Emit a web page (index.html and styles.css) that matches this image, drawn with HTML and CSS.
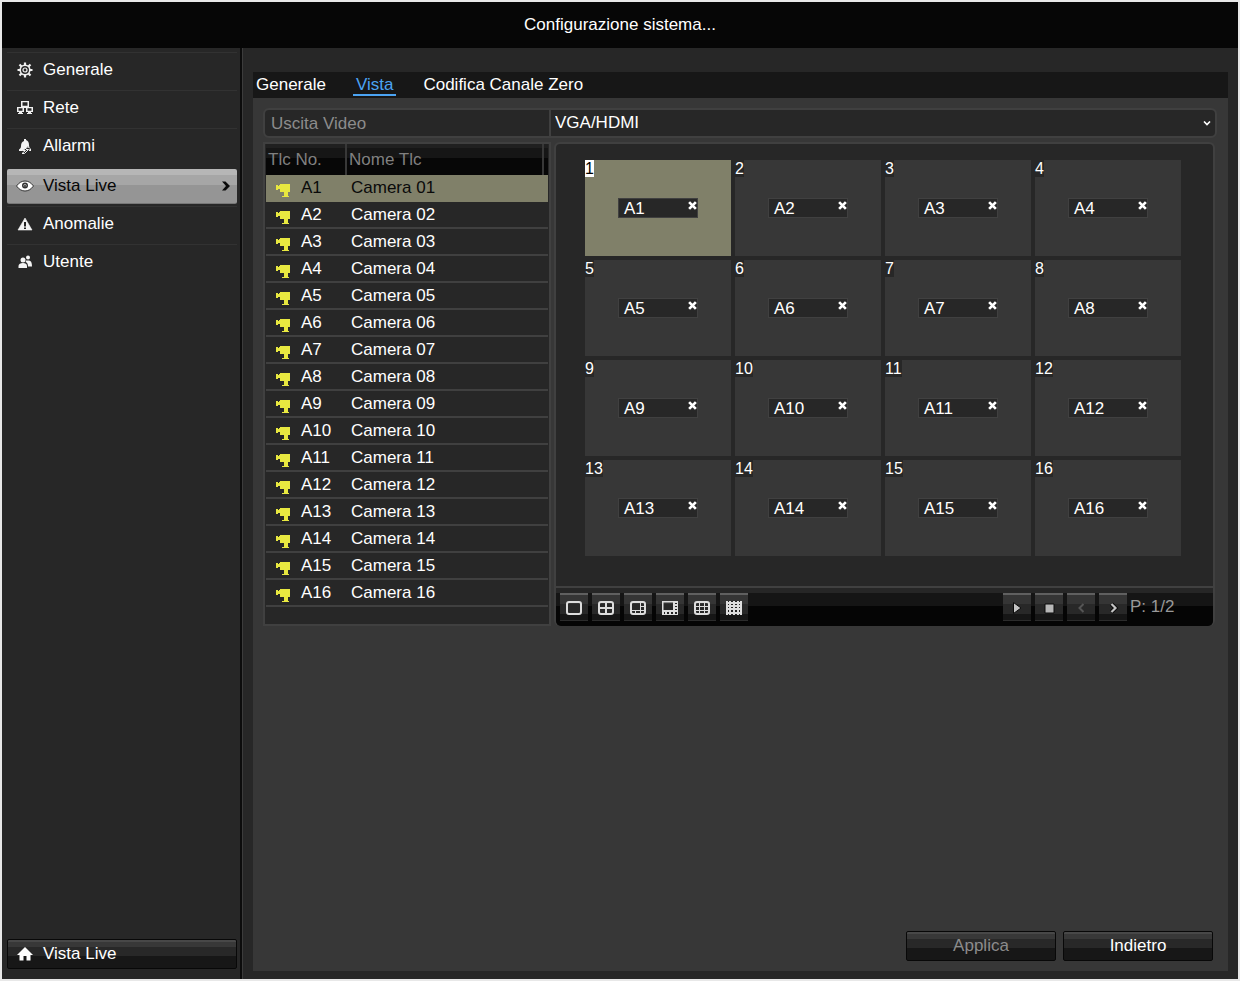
FILE: index.html
```html
<!DOCTYPE html>
<html lang="it">
<head>
<meta charset="utf-8">
<meta name="viewport" content="width=device-width, initial-scale=1">
<title>Configurazione sistema</title>
<link rel="stylesheet" href="styles.css">
</head>
<body>
<svg class="sprite" aria-hidden="true">
  <symbol id="cam" viewBox="0 0 14 13"><path d="M0 1h2v1h1V1h1V0h10v8h-2v4h1v1H6v-1h2V8H4V5H2v1H0z" fill="#e8e840"/></symbol>
  <symbol id="close" viewBox="0 0 8 8"><path d="M1 1l6 6M7 1L1 7" stroke="#fff" stroke-width="2.4"/></symbol>
</svg>
<div class="app">
  <header class="titlebar"><h1>Configurazione sistema...</h1></header>
  <div class="body">
    <aside class="sidebar">
      <nav class="menu" aria-label="Impostazioni">
        <a class="item" href="#generale"><svg class="icon" viewBox="0 0 16 16"><g fill="none" stroke="#f0f0f0"><circle cx="8" cy="8" r="4.800" stroke-width="1.600"/><circle cx="8" cy="8" r="2" stroke-width="1.200"/><path d="M8 .5v3M8 12.500v3M.5 8h3M12.500 8h3M2.500 2.500l2 2M11.500 11.500l2 2M2.500 13.500l2-2M11.500 4.500l2-2" stroke-width="2.200"/></g></svg>Generale</a>
        <a class="item" href="#rete"><svg class="icon" viewBox="0 0 16 16"><path d="M4 1h8v6h4v5h-2v1h1v1h-5v-1h1v-1H9V8H7v4H5v1h1v1H1v-1h1v-1H0V7h4zM5.500 2.300v3.400h5V2.300zM1.500 8.300v2.400h4V8.300zM10.500 8.300v2.400h4V8.300z" fill="#f0f0f0" fill-rule="evenodd"/></svg>Rete</a>
        <a class="item" href="#allarmi"><svg class="icon" viewBox="0 0 16 16"><path d="M7 1h2v1c2 .6 3 2.500 3 5 0 2 .7 3 2 4v2h-2l1-3.500-3 .5 1.500-2L5 13H2v-1.500c1.500-1 2-2 2-3.500 0-2.500 1-4.400 3-5z" fill="#f4f4f4"/><path d="M10 9.500L5.500 12.500h3L5 15.500h2.500l4-4H9" fill="none" stroke="#f4f4f4"/></svg>Allarmi</a>
        <a class="item active" href="#vista" aria-current="page"><svg class="icon eye" viewBox="0 0 18 12"><path d="M.5 6C3 2.500 6 1 9 1s6 1.500 8.500 5C15 9.500 12 11 9 11S3 9.500.5 6z" fill="#fff" stroke="#333"/><circle cx="9" cy="5.500" r="3" fill="#333"/><circle cx="9" cy="5.500" r="1.600" fill="#bbb"/><circle cx="9" cy="6" r="1" fill="#333"/></svg>Vista Live<svg class="chev" viewBox="0 0 8 10"><path d="M0 .5h3.500L8 5 3.500 9.500H0L4 5z" fill="#0a0a0a"/></svg></a>
        <a class="item" href="#anomalie"><svg class="icon" viewBox="0 0 16 16"><path d="M8 2l7 12H1z" fill="#f4f4f4" stroke="#f4f4f4" stroke-width=".6"/><path d="M7 6h2v4.500H7zM7 11.500h2V13H7z" fill="#222"/></svg>Anomalie</a>
        <a class="item" href="#utente"><svg class="icon" viewBox="0 0 16 16"><g fill="#f4f4f4"><circle cx="6" cy="6" r="2.500"/><path d="M1.500 14v-2c0-2 2-3 4.500-3s4 1 4 3v2z"/><circle cx="11" cy="3.500" r="2"/><path d="M9 6.500h3c2 0 3 2 3 6h-4C11 10 10.500 9 8.700 8z"/></g></svg>Utente</a>
      </nav>
      <button class="btn home" type="button"><svg class="icon" viewBox="0 0 16 16"><path d="M8 1l8 8h-2.500v5.500h-4V10h-3v4.500h-4V9H0z" fill="#fff"/></svg>Vista Live</button>
    </aside>
    <main class="main">
      <section class="panel">
        <nav class="tabs" aria-label="Schede">
          <a href="#tab-generale">Generale</a><a class="current" href="#tab-vista" aria-current="page">Vista</a><a href="#tab-zero">Codifica Canale Zero</a>
        </nav>
        <div class="field">
          <label for="output">Uscita Video</label>
          <div class="pick">
            <select id="output"><option>VGA/HDMI</option></select>
            <svg class="caret" viewBox="0 0 8 5"><path d="M1 .5l3 3 3-3" fill="none" stroke="#fff" stroke-width="1.600"/></svg>
          </div>
        </div>
        <div class="work">
          <div class="list">
            <table>
              <colgroup><col class="c-no"><col><col class="c-end"></colgroup>
              <thead><tr><th scope="col">Tlc No.</th><th scope="col">Nome Tlc</th><td></td></tr></thead>
              <tbody id="cameras"></tbody>
            </table>
          </div>
          <div class="view">
            <div class="grid" id="grid"></div>
            <div class="toolbar">
              <div class="tools">
                <button class="tool" type="button" aria-label="1 riquadro"><svg viewBox="0 0 16 14"><rect class="ln" x="1" y="1" width="14" height="12" rx="2"/></svg></button>
                <button class="tool" type="button" aria-label="4 riquadri"><svg viewBox="0 0 16 14"><rect class="ln" x="1" y="1" width="14" height="12" rx="2"/><path class="ln" d="M8 1v12M1 7h14"/></svg></button>
                <button class="tool" type="button" aria-label="6 riquadri"><svg viewBox="0 0 16 14"><rect class="ln" x="1" y="1" width="14" height="12" rx="2"/><path class="thin" d="M10.500 1v12M1 9.500h14M5.500 9.500V13M10.500 5.500H15"/></svg></button>
                <button class="tool" type="button" aria-label="8 riquadri"><svg viewBox="0 0 16 14"><path d="M0 0h16v14H0zM1.500 1.500v7.500H11V1.500z" fill="#ddd" fill-rule="evenodd"/><path d="M13 2h2v1h-2zM13 5h2v1h-2zM13 8h2v1h-2zM2 11h1v2H2zM5 11h2v2H5zM9 11h2v2H9zM13 11h2v2h-2z" fill="#222"/></svg></button>
                <button class="tool" type="button" aria-label="9 riquadri"><svg viewBox="0 0 16 14"><rect class="ln" x="1" y="1" width="14" height="12" rx="2"/><path class="thin" d="M5.500 1v12M10.500 1v12M1 5.500h14M1 9.500h14"/></svg></button>
                <button class="tool" type="button" aria-label="16 riquadri"><svg viewBox="0 0 16 14"><path d="M0 0h16v14H0z" fill="#ddd"/><path d="M2 0h1v1H2zM5 0h2v1H5zM9 0h2v1H9zM13 0h1v1h-1zM2 3h1v1H2zM5 3h2v1H5zM9 3h2v1H9zM13 3h1v1h-1zM2 6h1v1H2zM5 6h2v1H5zM9 6h2v1H9zM13 6h1v1h-1zM2 9h1v2H2zM5 9h2v2H5zM9 9h2v2H9zM13 9h1v2h-1zM2 13h1v1H2zM5 13h2v1H5zM9 13h2v1H9zM13 13h1v1h-1z" fill="#222"/></svg></button>
              </div>
              <div class="tools">
                <button class="tool" type="button" aria-label="Avvia"><svg viewBox="0 0 16 14"><path d="M4.500 1.500v11L12 7z" fill="#c4c4c4" stroke="#0a0a0a"/></svg></button>
                <button class="tool" type="button" aria-label="Ferma"><svg viewBox="0 0 16 14"><path d="M4 3h9v9H4z" fill="#b8b8b8" stroke="#0a0a0a"/></svg></button>
                <button class="tool" type="button" aria-label="Pagina precedente" disabled><svg viewBox="0 0 16 14"><path d="M10.500 3L6.500 7l4 4" fill="none" stroke="#555" stroke-width="2"/></svg></button>
                <button class="tool" type="button" aria-label="Pagina successiva"><svg viewBox="0 0 16 14"><path d="M6.500 3l4 4-4 4" fill="none" stroke="#080808" stroke-width="4"/><path d="M6.500 3l4 4-4 4" fill="none" stroke="#c4c4c4" stroke-width="2.200"/></svg></button>
              </div>
              <span class="page">P: 1/2</span>
            </div>
          </div>
        </div>
        <footer class="actions">
          <button class="btn" type="button" disabled>Applica</button>
          <button class="btn" type="button">Indietro</button>
        </footer>
      </section>
    </main>
  </div>
</div>
<script src="app.js"></script>
</body>
</html>
```
FILE: styles.css
```css
* { box-sizing: border-box; }

body {
  margin: 0;
  background: #e8e8e8;
  color: #fff;
  font: 17px/20px "Liberation Sans", Arial, sans-serif;
}

button, select { font: inherit; color: inherit; }
a { color: inherit; text-decoration: none; }
.sprite { position: absolute; width: 0; height: 0; }

.app {
  display: flex;
  flex-direction: column;
  min-height: 100vh;
  border: 2px solid #e8e8e8;
  background: #272727;
}

.titlebar { padding: 13px 12px; height: 46px; background: #060606; text-align: center; }
.titlebar h1 { margin: 0; font-size: 17px; font-weight: 400; }

.body { display: flex; flex: 1; }

/* Sidebar */
.sidebar {
  display: flex;
  flex-direction: column;
  justify-content: space-between;
  flex: 0 0 240px;
  padding: 4px 3px 10px 5px;
  border-right: 2px solid #0c0c0c;
}
.item {
  display: flex;
  align-items: center;
  height: 38px;
  padding: 0 7px 3px 10px;
  border-top: 1px solid #323232;
}
.icon { flex: none; width: 16px; height: 16px; margin-right: 10px; }
.eye { width: 18px; height: 12px; margin: 0 9px 0 -1px; }
.item.active {
  height: 35px;
  margin: 3px 0 2px;
  padding-bottom: 0;
  border-top: 0;
  border-bottom: 1px solid #777;
  border-radius: 2px;
  color: #060606;
  background: linear-gradient(#b6b6b6 0 6px, #a6a6a6 6px 16px, #959595 16px);
}
.chev { width: 8px; height: 10px; margin-left: auto; }

/* Glossy push buttons */
.btn {
  width: 150px;
  height: 30px;
  padding: 0;
  border: 1px solid #080808;
  border-radius: 2px;
  background: linear-gradient(#484848 0 2px, #383838 2px 7px, #282828 7px 16px, #171717 16px);
}
.btn:disabled { color: #8c8c8c; }
.home { display: flex; align-items: center; width: 100%; padding-left: 9px; }

/* Settings panel */
.main { display: flex; flex: 1; padding: 24px 10px 8px; border-left: 1px solid #3c3c3c; }
.panel { display: flex; flex: 1; flex-direction: column; background: #373737; }

.tabs { display: flex; gap: 27px; height: 26px; padding: 3px 0 0 3px; background: #171717; }
.tabs a { height: 21px; }
.tabs .current { padding: 0 3px; border-bottom: 2px solid #4ba3f2; color: #4ba3f2; }

.field {
  display: flex;
  margin: 10px 11px 0 10px;
  height: 30px;
  border: 2px solid #404040;
  border-radius: 6px;
  background: #272727;
}
.field label { width: 286px; padding: 4px 6px; border-right: 2px solid #404040; color: #8c8c8c; }
.pick { position: relative; flex: 1; }
.pick select {
  width: 100%;
  height: 25px;
  padding: 0 24px 0 4px;
  border: 0;
  appearance: none;
  background: transparent;
}
.pick option { background: #272727; }
.caret { position: absolute; top: 11px; right: 4px; width: 8px; height: 5px; pointer-events: none; }

.work { display: flex; gap: 3px; margin: 4px 13px 0 10px; }

/* Camera list */
.list { flex: 0 0 288px; padding: 0 1px; border: 2px solid #404040; background: #272727; }
.list table { width: 100%; border-collapse: separate; border-spacing: 0; table-layout: fixed; }
.c-no { width: 81px; }
.c-end { width: 4px; }
.list th, .list td { padding: 0; text-align: left; font-weight: 400; }
.list thead { background: linear-gradient(#202020 0 4px, #161616 4px 14px, #070707 14px); color: #808080; }
.list thead th { height: 31px; padding-left: 2px; border-right: 2px solid #383838; }
.list tbody td { height: 27px; padding-top: 1px; border-bottom: 2px solid #404040; }
.list td:first-child { padding-left: 10px; }
.list td:nth-child(2) { padding-left: 4px; }
.list .selected td { border-color: #808069; background: #808069; color: #0a0a0a; }
.num { display: flex; align-items: center; gap: 11px; }
.num svg { width: 14px; height: 13px; margin-top: 4px; }

/* Live view layout */
.view {
  display: flex;
  flex: 1;
  flex-direction: column;
  border: 2px solid #404040;
  border-bottom: 0;
  border-radius: 6px;
  background: #272727;
}
.grid { display: grid; flex: 1; grid-template-columns: repeat(4, 1fr); align-content: start; gap: 4px; padding: 16px 32px 30px 29px; }
.cell { position: relative; display: grid; place-items: center; height: 96px; background: #373737; }
.index { position: absolute; top: 0; left: 0; height: 17px; background: #272727; font-size: 16px; line-height: 17px; }
.chip { display: flex; justify-content: space-between; width: 80px; height: 20px; padding-left: 5px; border: 1px solid #404040; background: #272727; }
.chip button { width: 10px; height: 12px; padding: 0; border: 0; background: none; line-height: 0; }
.chip svg { width: 9px; height: 9px; }
.cell.selected { background: #808069; }
.selected .index { background: #fff; color: #000; }

.toolbar {
  display: flex;
  align-items: center;
  height: 40px;
  padding: 0 4px;
  border-top: 2px solid #404040;
  border-radius: 0 0 5px 5px;
  background: linear-gradient(#262626 0 5px, #151515 5px 18px, #050505 18px);
}
.tools { display: flex; gap: 4px; }
.tools:first-child { margin-right: auto; }
.tool {
  display: grid;
  place-items: center;
  width: 28px;
  height: 28px;
  padding: 0;
  border: 0;
  border-top: 2px solid #606060;
  border-bottom: 1px solid #2c2c2c;
  background: linear-gradient(#353535 0 9px, #282828 9px 19px, #161616 19px);
}
.tool svg { width: 16px; height: 14px; }
.ln { fill: none; stroke: #ddd; stroke-width: 2; }
.thin { fill: none; stroke: #ddd; stroke-width: 1; }
.page { width: 82px; padding-left: 3px; color: #999; }

.actions { display: flex; justify-content: flex-end; gap: 7px; margin-top: auto; padding: 20px 15px 10px; }
```
FILE: app.js
```js
const cameras = document.getElementById("cameras");
const grid = document.getElementById("grid");

for (let n = 1; n <= 16; n++) {
  const name = "Camera " + String(n).padStart(2, "0");
  const state = n === 1 ? "selected" : "";

  cameras.insertAdjacentHTML("beforeend",
    `<tr class="${state}"><td><div class="num"><svg><use href="#cam"/></svg>A${n}</div></td>` +
    `<td>${name}</td><td></td></tr>`);

  grid.insertAdjacentHTML("beforeend",
    `<div class="cell ${state}"><span class="index">${n}</span>` +
    `<div class="chip"><span>A${n}</span>` +
    `<button type="button" aria-label="Rimuovi A${n}"><svg><use href="#close"/></svg></button></div></div>`);
}
```
